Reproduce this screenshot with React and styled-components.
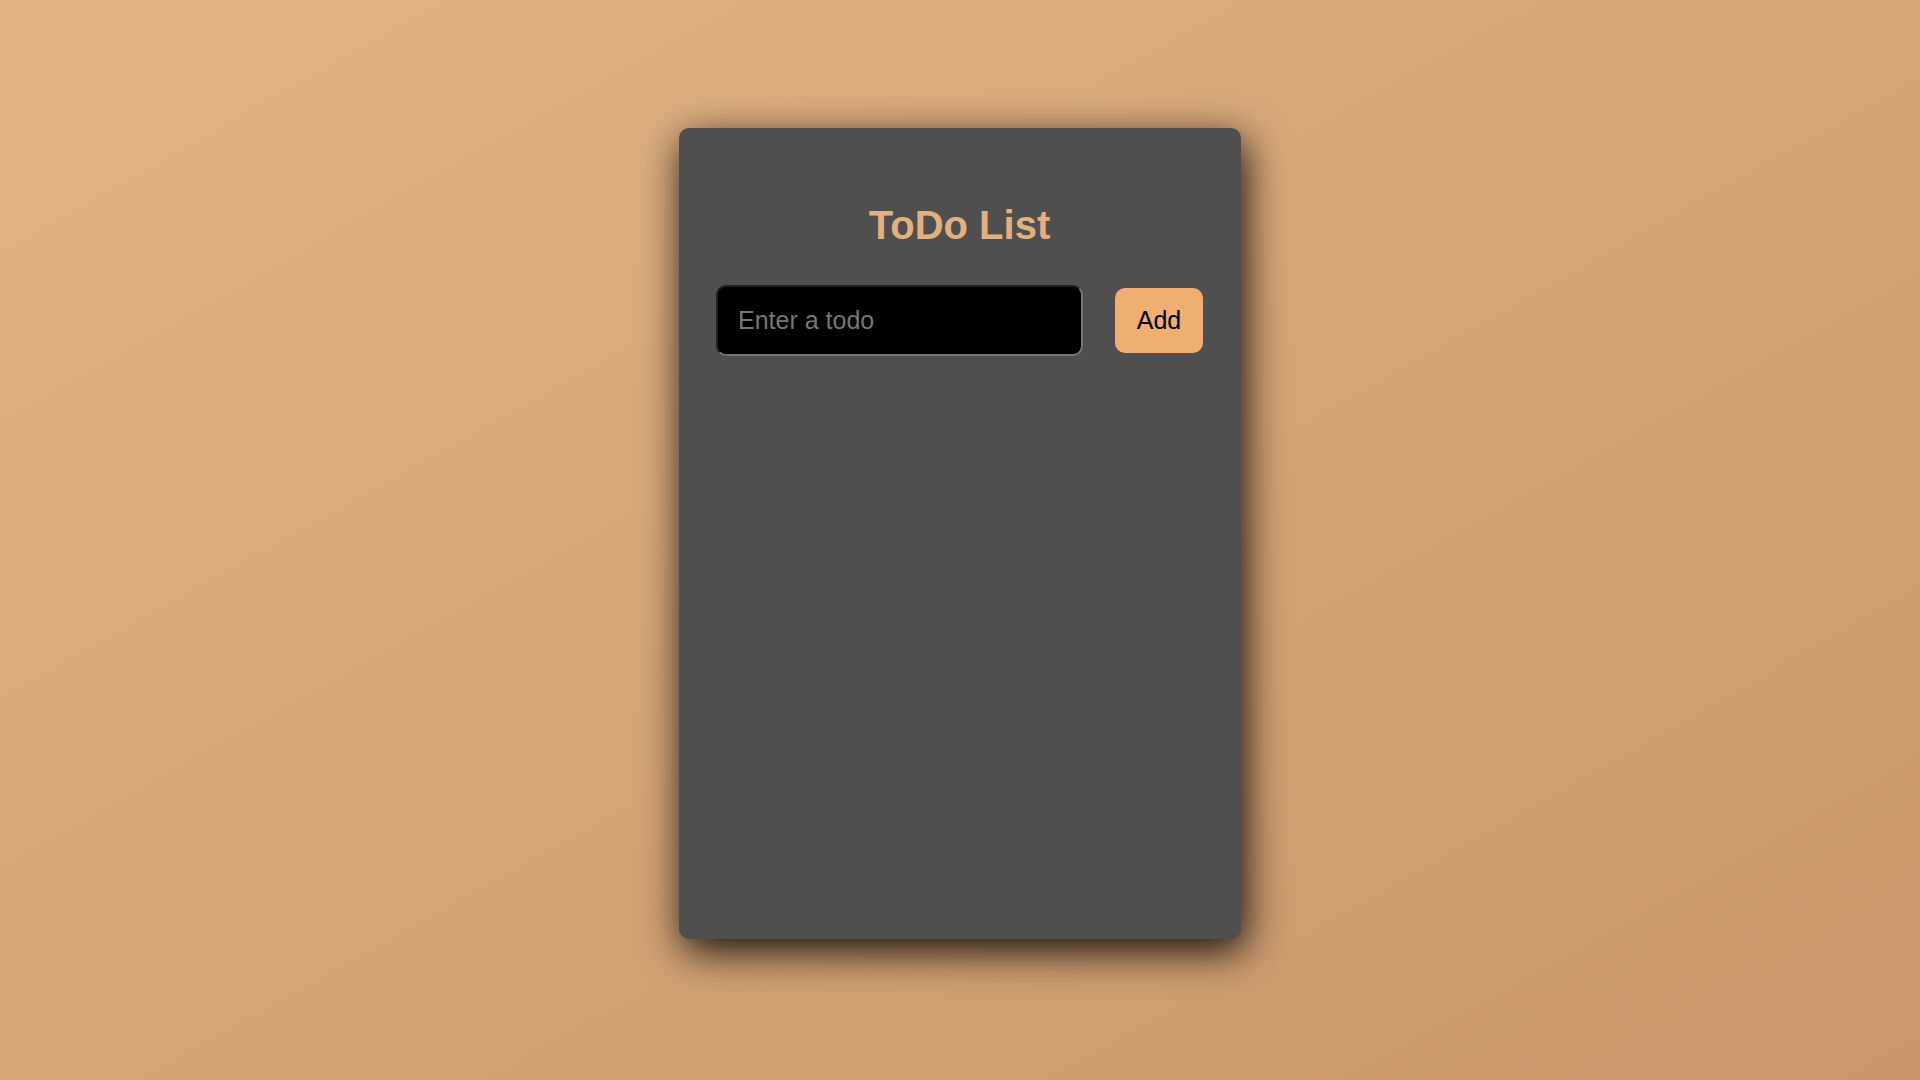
import React, { useState } from 'react';
import styled, { createGlobalStyle } from 'styled-components';

const GlobalStyle = createGlobalStyle`
  html, body {
    margin: 0;
    padding: 0;
  }

  body {
    font-family: 'Liberation Sans', Arial, sans-serif;
    min-height: 100vh;
    background: linear-gradient(to bottom right, #e1b385, #c8966a);
  }
`

const Page = styled.main`
  display: flex;
  justify-content: center;
  align-items: flex-start;
  min-height: 100vh;
  box-sizing: border-box;
  padding-top: 128px;
`

const Card = styled.section`
  display: flex;
  flex-direction: column;
  width: 562px;
  height: 811px;
  box-sizing: border-box;
  padding: 0 38px 0 37px;
  background: #4f4f4f;
  border-radius: 10px;
  box-shadow: 4px 12px 40px rgba(0, 0, 0, 0.9);

  .title{
    margin: 74px 0 37px;
    text-align: center;
    font-size: 40px;
    font-weight: 700;
    line-height: 46px;
    color: #e3b07e;
  }
`

const Form = styled.form`
  display: flex;
  align-items: center;
  gap: 32px;
`

const TodoInput = styled.input`
  width: 367px;
  height: 71px;
  box-sizing: border-box;
  padding: 0 20px;
  font-family: 'Liberation Sans', Arial, sans-serif;
  font-size: 25px;
  color: #fff;
  background: #000;
  border: 2px inset rgb(118, 118, 118);
  border-radius: 10px;
  outline: none;

  ::placeholder{
    color: #7c7c7c;
  }
`

const AddButton = styled.button`
  width: 88px;
  height: 65px;
  padding: 0;
  font-family: 'Liberation Sans', Arial, sans-serif;
  font-size: 25px;
  color: #000;
  background: #f0ae71;
  border: none;
  border-radius: 10px;
  cursor: pointer;
`

const List = styled.ul`
  list-style: none;
  margin: 20px 0 0;
  padding: 0;
  color: #fff;
`

function App() {
  const [text, setText] = useState('');
  const [todos, setTodos] = useState([]);

  function handleAdd(e){
    e.preventDefault();
    if (!text.trim()) return;
    setTodos([...todos, { id: Date.now(), text }]);
    setText('');
  }

  return(
    <>
      <GlobalStyle />
      <Page>
        <Card>
          <h1 className='title'>ToDo List</h1>
          <Form onSubmit={handleAdd}>
            <TodoInput
              placeholder='Enter a todo'
              value={text}
              onChange={e => setText(e.target.value)}
            />
            <AddButton type='submit'>Add</AddButton>
          </Form>
          <List>
            {todos.map(x => (
              <li key={x.id}>{x.text}</li>
            ))}
          </List>
        </Card>
      </Page>
    </>
  )
}

export default App;
